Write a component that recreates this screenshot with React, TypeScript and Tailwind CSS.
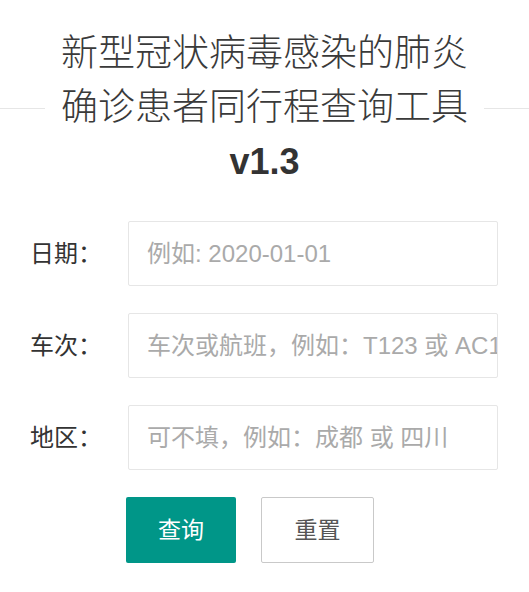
import React, { useState } from 'react';

const FONT = 'font-["Liberation_Sans","Noto_Sans_CJK_SC",sans-serif]';

interface FieldProps {
  label: string;
  placeholder: string;
  value: string;
  onChange: (v: string) => void;
}

const Field: React.FC<FieldProps> = ({ label, placeholder, value, onChange }) => (
  <div className="flex items-center">
    <label className="w-[98px] shrink-0 text-[24px] text-[#333]">{label}</label>
    <input
      value={value}
      onChange={(e) => onChange(e.target.value)}
      placeholder={placeholder}
      className="flex-1 min-w-0 h-[65px] border border-[#e6e6e6] rounded-[2px] pl-[18px] pr-0 text-[24px] text-[#333] placeholder:text-[#aaa] outline-none"
    />
  </div>
);

export default function App() {
  const [date, setDate] = useState('');
  const [train, setTrain] = useState('');
  const [area, setArea] = useState('');

  const reset = () => {
    setDate('');
    setTrain('');
    setArea('');
  };

  return (
    <div className={`min-h-screen bg-white ${FONT}`}>
      {/* Title */}
      <div className="flex items-center pt-[27px]">
        <div className="flex-1 h-px bg-[#e6e6e6]" />
        <div className="px-[16px] text-center text-[#3a3a3a]">
          <h1 className="text-[37px] leading-[54px] font-light">新型冠状病毒感染的肺炎</h1>
          <h1 className="text-[37px] leading-[54px] font-light">确诊患者同行程查询工具</h1>
          <p className="text-[36px] leading-[54px] font-bold text-[#333]">v1.3</p>
        </div>
        <div className="flex-1 h-px bg-[#e6e6e6]" />
      </div>

      {/* Form */}
      <div className="mt-[32px] pl-[30px] pr-[31px] flex flex-col gap-[27px]">
        <Field label="日期：" placeholder="例如: 2020-01-01" value={date} onChange={setDate} />
        <Field label="车次：" placeholder="车次或航班，例如：T123 或 AC1234" value={train} onChange={setTrain} />
        <Field label="地区：" placeholder="可不填，例如：成都 或 四川" value={area} onChange={setArea} />
      </div>

      <div className="mt-[27px] pl-[126px] flex gap-[25px]">
        <button className="w-[110px] h-[66px] rounded-[2px] bg-[#009688] text-white text-[23px]">
          查询
        </button>
        <button
          onClick={reset}
          className="w-[113px] h-[66px] rounded-[2px] border border-[#c9c9c9] bg-white text-[#555] text-[23px]"
        >
          重置
        </button>
      </div>
    </div>
  );
}
